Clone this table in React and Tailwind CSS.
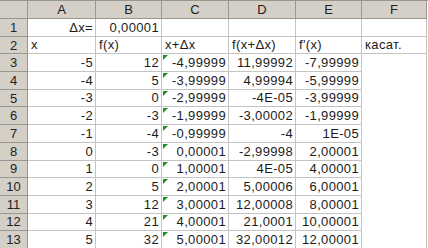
import React from "react";

const cols = ["A", "B", "C", "D", "E", "F"];

const rows = [
  ["-5", "12", "-4,99999", "11,99992", "-7,99999"],
  ["-4", "5", "-3,99999", "4,99994", "-5,99999"],
  ["-3", "0", "-2,99999", "-4E-05", "-3,99999"],
  ["-2", "-3", "-1,99999", "-3,00002", "-1,99999"],
  ["-1", "-4", "-0,99999", "-4", "1E-05"],
  ["0", "-3", "0,00001", "-2,99998", "2,00001"],
  ["1", "0", "1,00001", "4E-05", "4,00001"],
  ["2", "5", "2,00001", "5,00006", "6,00001"],
  ["3", "12", "3,00001", "12,00008", "8,00001"],
  ["4", "21", "4,00001", "21,0001", "10,00001"],
  ["5", "32", "5,00001", "32,00012", "12,00001"],
];

const Head = ({ children }) => (
  <div className="flex items-center justify-center bg-[#d4d0c8] border-r border-b border-[#9a978f] text-[13px] leading-[15px] text-[#222]">
    {children}
  </div>
);

const Cell = ({ children, left, flag, noBottom }) => (
  <div
    className={`relative flex items-end whitespace-nowrap border-r border-[#c4c4c4] pb-[1px] text-[13px] leading-[15px] text-[#1c1c1c] tracking-[0.35px] ${
      noBottom ? "" : "border-b"
    } ${left ? "justify-start pl-[3px]" : "justify-end pr-[2px]"}`}
  >
    {flag && (
      <span className="absolute left-[1px] top-[1px] h-0 w-0 border-t-[5px] border-r-[5px] border-t-[#1f8f1f] border-r-transparent" />
    )}
    {children}
  </div>
);

export default function App() {
  return (
    <div
      className="w-[428px] h-[248px] overflow-hidden bg-white"
      style={{ fontFamily: '"Liberation Sans", Arial, sans-serif' }}
    >
      <div className="grid grid-cols-[28px_68px_66px_67px_67px_66px_65px] grid-rows-[18px_repeat(13,17.7px)] border-t border-[#9a978f]">
        <Head />
        {cols.map((c) => (
          <Head key={c}>{c}</Head>
        ))}

        <Head>1</Head>
        <Cell>Δx=</Cell>
        <Cell>0,00001</Cell>
        <Cell />
        <Cell />
        <Cell />
        <Cell />

        <Head>2</Head>
        <Cell left>x</Cell>
        <Cell left>f(x)</Cell>
        <Cell left>x+Δx</Cell>
        <Cell left>f(x+Δx)</Cell>
        <Cell left>f'(x)</Cell>
        <Cell left>касат.</Cell>

        {rows.map((r, i) => (
          <React.Fragment key={i}>
            <Head>{i + 3}</Head>
            <Cell>{r[0]}</Cell>
            <Cell>{r[1]}</Cell>
            <Cell flag>{r[2]}</Cell>
            <Cell>{r[3]}</Cell>
            <Cell>{r[4]}</Cell>
            <Cell noBottom />
          </React.Fragment>
        ))}
      </div>
    </div>
  );
}
